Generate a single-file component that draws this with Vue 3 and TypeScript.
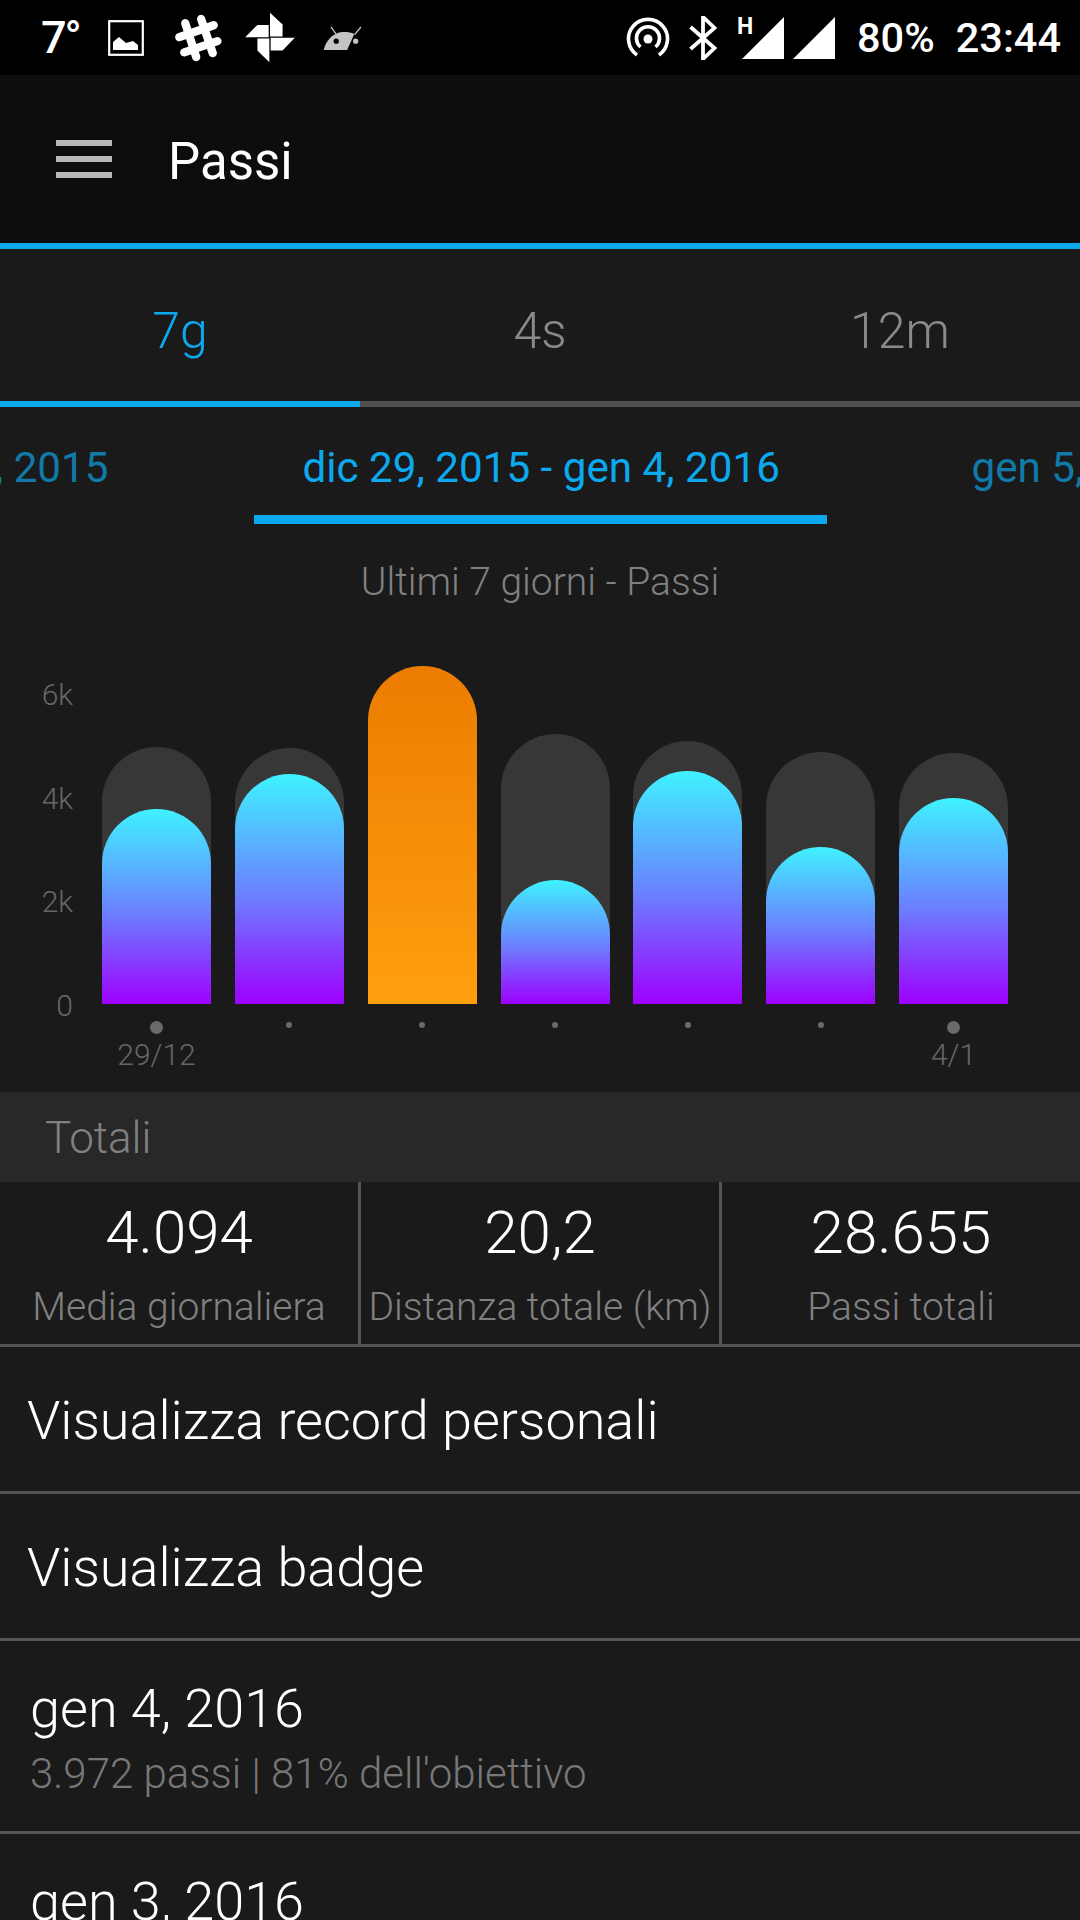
<script setup lang="ts">
interface Bar {
  goal: number
  steps: number
  done?: boolean
  label?: string
}

const tabs = ['7g', '4s', '12m']
const yLabels = ['6k', '4k', '2k', '0']

const bars: Bar[] = [
  { goal: 257, steps: 195, label: '29/12' },
  { goal: 256, steps: 230 },
  { goal: 338, steps: 338, done: true },
  { goal: 270, steps: 124 },
  { goal: 263, steps: 233 },
  { goal: 252, steps: 157 },
  { goal: 251, steps: 206, label: '4/1' },
]

const totals = [
  { value: '4.094', label: 'Media giornaliera' },
  { value: '20,2', label: 'Distanza totale (km)' },
  { value: '28.655', label: 'Passi totali' },
]
</script>

<template>
  <div class="screen">
    <div class="status">
      <span class="temp">7°</span>
      <svg class="ic-image" viewBox="0 0 36 36">
        <rect x="1.2" y="1.2" width="33.600" height="33.600" fill="none" stroke="#fff" stroke-width="2.200" />
        <path d="M5 22l6-5 7 6 7-2 5 4v5H5z" fill="#fff" />
      </svg>
      <svg class="ic-slack" viewBox="525 40 140 145">
        <g stroke="#fff" stroke-width="25" stroke-linecap="round" fill="none">
          <path d="M555 68 588 170" />
          <path d="M603 55 638 158" />
          <path d="M537 110 641 74" />
          <path d="M552 156 652 122" />
        </g>
      </svg>
      <svg class="ic-wheel" viewBox="735 36 150 154">
        <path fill="#fff" d="M810 38l38 36v36h-38zM812 114h73l-37 38h-36zM808 188l-36-36v-36h36zM735 112l37-37h34v37z" />
      </svg>
      <svg class="ic-droid" viewBox="968 76 116 76">
        <path fill="#c4c4c4" d="M969 149C975 120 995 100 1020 95 1035 93 1050 95 1062 100L1040 149z" />
        <path d="M991 79l15 21M1082 79l-19 23" stroke="#c4c4c4" stroke-width="4" fill="none" />
        <circle cx="1007" cy="122" r="8" fill="#000" />
        <circle cx="1066" cy="122" r="8" fill="#c4c4c4" />
      </svg>
      <span class="spacer"></span>
      <svg class="ic-hotspot" viewBox="0 0 44 42">
        <g fill="none" stroke="#fff" stroke-width="3.600">
          <path d="M11 38a19.500 19.500 0 1 1 22 0" />
          <path d="M14.500 30a11.500 11.500 0 1 1 15 0" />
        </g>
        <circle cx="22" cy="22" r="4.500" fill="#fff" />
      </svg>
      <svg class="ic-bt" viewBox="0 0 28 44">
        <path d="M1.500 11l24 21-11.500 11V1l11.500 11-24 21" fill="none" stroke="#fff" stroke-width="3.800" />
      </svg>
      <span class="net-h">H</span>
      <svg class="ic-signal first" viewBox="0 0 42 42"><path d="M0 42 42 0v42z" fill="#fff" /></svg>
      <svg class="ic-signal" viewBox="0 0 42 42"><path d="M0 42 42 0v42z" fill="#fff" /></svg>
      <span class="batt">80%</span>
      <span class="clock">23:44</span>
    </div>

    <header class="appbar">
      <div class="burger"><i></i><i></i><i></i></div>
      <h1>Passi</h1>
    </header>

    <div class="tabs">
      <div v-for="(t, i) in tabs" :key="t" class="tab" :class="{ active: i === 0 }">{{ t }}</div>
    </div>

    <div class="dates">
      <div class="date prev"><span>dic 22, 2015 - dic 28, 2015</span></div>
      <div class="date current">dic 29, 2015 - gen 4, 2016</div>
      <div class="date next">gen 5, 2016 - gen 11, 2016</div>
    </div>

    <div class="chart-title">Ultimi 7 giorni - Passi</div>

    <div class="chart">
      <div class="y-axis">
        <span v-for="l in yLabels" :key="l">{{ l }}</span>
      </div>
      <div class="columns">
        <div v-for="(b, i) in bars" :key="i" class="col">
          <div class="plot">
            <div class="goal" :style="{ height: b.goal + 'px' }"></div>
            <div class="steps" :class="{ done: b.done }" :style="{ height: b.steps + 'px' }"></div>
          </div>
          <div class="tick" :class="{ big: b.label }"></div>
          <div v-if="b.label" class="x-label">{{ b.label }}</div>
        </div>
      </div>
    </div>

    <div class="section">Totali</div>
    <div class="totals">
      <div v-for="t in totals" :key="t.label" class="total">
        <div class="value">{{ t.value }}</div>
        <div class="label">{{ t.label }}</div>
      </div>
    </div>

    <div class="row link">Visualizza record personali</div>
    <div class="row link">Visualizza badge</div>
    <div class="row day">
      <div class="day-date">gen 4, 2016</div>
      <div class="day-info">3.972 passi | 81% dell'obiettivo</div>
    </div>
    <div class="row day">
      <div class="day-date">gen 3, 2016</div>
    </div>
  </div>
</template>

<style>
html,
body {
  margin: 0;
  background: #1a1a1a;
}
</style>

<style scoped>
.screen {
  width: 1080px;
  height: 1920px;
  overflow: hidden;
  background: #1a1a1a;
  font-family: Roboto, 'Liberation Sans', sans-serif;
  color: #fff;
}

.status {
  height: 75px;
  background: #000;
  display: flex;
  align-items: center;
  padding: 0 19px 0 41px;
  box-sizing: border-box;
}
.temp {
  font-size: 45px;
  width: 67px;
  font-weight: 500;
  letter-spacing: -2px;
  line-height: 75px;
}
.ic-image {
  width: 36px;
  height: 36px;
}
.ic-slack {
  width: 47px;
  height: 48px;
  margin-left: 31px;
}
.ic-wheel {
  width: 50px;
  height: 51px;
  margin-left: 23px;
}
.ic-droid {
  width: 39px;
  height: 25px;
  margin-left: 28px;
  margin-top: 2px;
}
.spacer {
  flex: 1;
}
.ic-hotspot {
  width: 44px;
  height: 42px;
}
.ic-bt {
  width: 28px;
  height: 44px;
  margin-left: 19px;
}
.net-h {
  font-size: 23px;
  font-weight: 700;
  margin-left: 20px;
  margin-top: -22px;
  width: 5px;
}
.ic-signal {
  width: 42px;
  height: 42px;
  margin-left: 9px;
  margin-top: 1px;
}
.ic-signal.first {
  margin-left: 0;
}
.batt,
.clock {
  font-size: 41.5px;
  font-weight: 500;
  line-height: 75px;
}
.batt {
  margin-left: 22px;
}
.clock {
  margin-left: 21px;
}

.appbar {
  height: 168px;
  background: #0d0d0d;
  border-bottom: 6px solid #0da9ee;
  display: flex;
  align-items: center;
  padding-left: 56px;
}
.burger {
  width: 56px;
  display: flex;
  flex-direction: column;
  gap: 10px;
}
.burger i {
  display: block;
  height: 6px;
  background: #b8b8b8;
}
.appbar h1 {
  margin: 4px 0 0 56px;
  font-size: 51px;
  font-weight: 400;
}

.tabs {
  display: flex;
  height: 158px;
  box-sizing: border-box;
}
.tab {
  flex: 1;
  text-align: center;
  font-size: 50px;
  font-weight: 300;
  color: #8a8a8a;
  line-height: 164px;
  border-bottom: 6px solid #505050;
}
.tab.active {
  color: #0da9ee;
  border-color: #0da9ee;
}

.dates {
  height: 117px;
  display: flex;
  justify-content: center;
  gap: 96px;
  overflow: hidden;
}
.date {
  flex: none;
  width: 573px;
  height: 117px;
  box-sizing: border-box;
  padding: 6px 49px 0;
  font-size: 42.2px;
  line-height: 110px;
  color: #127aa8;
  white-space: nowrap;
}
.date.prev {
  display: flex;
  justify-content: flex-end;
}
.date.prev span {
  flex: none;
}
.date.current {
  text-align: center;
  color: #0da9ee;
  border-bottom: 9px solid #0da9ee;
}

.chart-title {
  text-align: center;
  font-size: 39px;
  font-weight: 300;
  color: #808080;
  margin-top: 35px;
  line-height: 46px;
}

.chart {
  display: flex;
  height: 454px;
  margin-top: 33px;
}
.y-axis {
  width: 73px;
  height: 347px;
  margin-top: 39px;
  display: flex;
  flex-direction: column;
  justify-content: space-between;
  align-items: flex-end;
  font-size: 30px;
  font-weight: 300;
  color: #666;
  line-height: 36px;
}
.columns {
  display: flex;
  gap: 23.85px;
  margin-left: 29px;
}
.col {
  width: 109px;
  display: flex;
  flex-direction: column;
  align-items: center;
}
.plot {
  position: relative;
  width: 100%;
  height: 366px;
  flex: none;
}
.goal,
.steps {
  position: absolute;
  left: 0;
  right: 0;
  bottom: 0;
  border-radius: 54.5px 54.5px 0 0;
}
.goal {
  background: #373737;
}
.steps {
  background: linear-gradient(#3ff2ff, #6d7bff 55%, #9e00ff);
}
.steps.done {
  background: linear-gradient(#ec7c00, #ff9f0f);
}
.tick {
  width: 6px;
  height: 6px;
  border-radius: 50%;
  background: #6a6a6a;
  margin-top: 18px;
}
.tick.big {
  width: 13px;
  height: 13px;
  margin-top: 17px;
}
.x-label {
  font-size: 30px;
  font-weight: 300;
  color: #666;
  line-height: 34px;
  margin-top: 4px;
}

.section {
  height: 90px;
  background: #282828;
  padding-left: 45px;
  font-size: 44px;
  font-weight: 300;
  line-height: 92px;
  color: #808080;
}

.totals {
  display: flex;
  height: 165px;
  border-bottom: 3px solid #555;
  box-sizing: border-box;
}
.total {
  flex: 1;
  text-align: center;
  border-left: 3px solid #555;
  white-space: nowrap;
}
.total:first-child {
  border-left: 0;
}
.value {
  font-size: 60px;
  font-weight: 300;
  line-height: 70px;
  margin-top: 16px;
}
.label {
  font-size: 39px;
  font-weight: 300;
  line-height: 44px;
  color: #808080;
  margin-top: 17px;
}

.row {
  border-bottom: 3px solid #555;
  box-sizing: border-box;
}
.link {
  height: 147px;
  padding-left: 27px;
  font-size: 54px;
  font-weight: 300;
  line-height: 148px;
}
.day {
  height: 193px;
  padding: 36px 0 0 30px;
}
.day-date {
  font-size: 54px;
  font-weight: 300;
  line-height: 64px;
}
.day-info {
  font-size: 42px;
  font-weight: 300;
  line-height: 50px;
  color: #777;
  margin-top: 8px;
}
</style>
